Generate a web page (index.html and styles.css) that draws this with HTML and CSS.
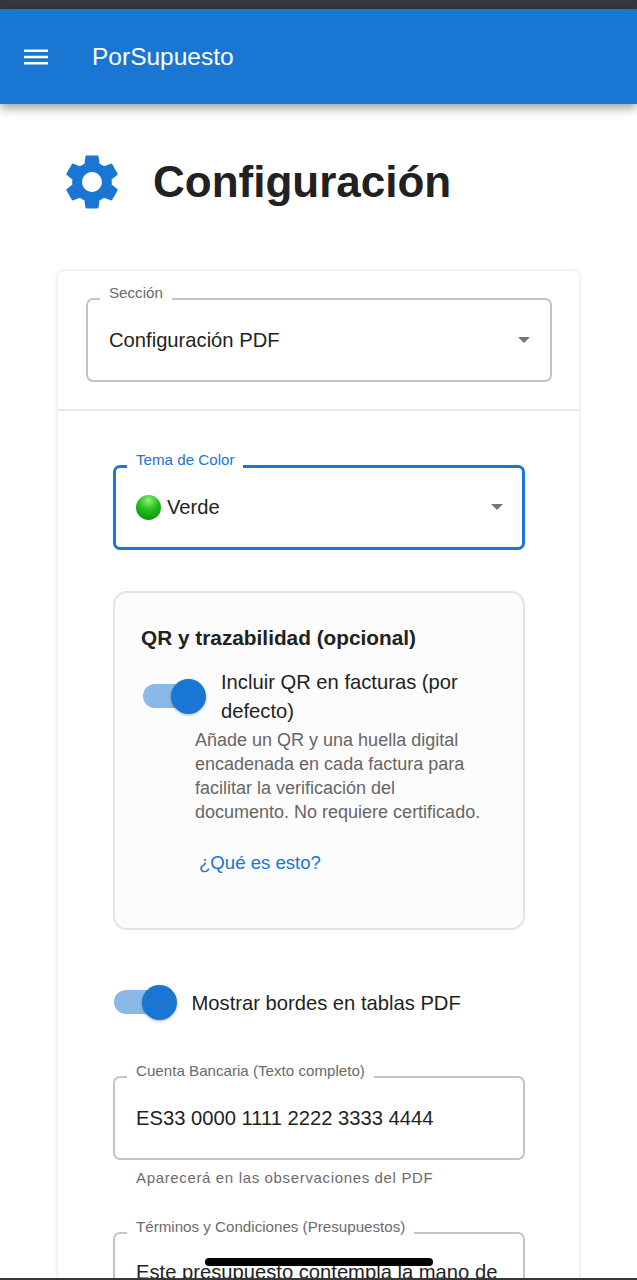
FILE: index.html
```html
<!DOCTYPE html>
<html lang="es">
<head>
  <meta charset="UTF-8" />
  <meta name="viewport" content="width=device-width, initial-scale=1" />
  <title>PorSupuesto</title>
  <link rel="stylesheet" href="styles.css">
</head>
<body>
  <div class="status-strip"></div>

  <header class="app-bar">
    <svg class="menu-icon" viewBox="0 0 24 16" aria-hidden="true">
      <path d="M0 0.5h24v2.6H0zM0 6.7h24v2.6H0zM0 12.9h24v2.6H0z" />
    </svg>
    <span class="app-title">PorSupuesto</span>
  </header>

  <main class="content">
    <div class="page-head">
      <svg class="gear-icon" viewBox="0 0 24 24" aria-hidden="true">
        <path d="M19.14 12.94c.04-.3.06-.61.06-.94 0-.32-.02-.64-.07-.94l2.03-1.58c.18-.14.23-.41.12-.61l-1.92-3.32c-.12-.22-.37-.29-.59-.22l-2.39.96c-.5-.38-1.03-.7-1.62-.94l-.36-2.54c-.04-.24-.24-.41-.48-.41h-3.84c-.24 0-.43.17-.47.41l-.36 2.54c-.59.24-1.13.57-1.62.94l-2.39-.96c-.22-.08-.47 0-.59.22L2.74 8.87c-.12.21-.08.47.12.61l2.03 1.58c-.05.3-.09.63-.09.94s.02.64.07.94l-2.03 1.58c-.18.14-.23.41-.12.61l1.92 3.32c.12.22.37.29.59.22l2.39-.96c.5.38 1.03.7 1.62.94l.36 2.54c.05.24.24.41.48.41h3.84c.24 0 .44-.17.47-.41l.36-2.54c.59-.24 1.13-.56 1.62-.94l2.39.96c.22.08.47 0 .59-.22l1.92-3.32c.12-.22.07-.47-.12-.61l-2.01-1.58zM12 15.6c-1.98 0-3.6-1.62-3.6-3.6s1.62-3.6 3.6-3.6 3.6 1.62 3.6 3.6-1.62 3.6-3.6 3.6z" />
      </svg>
      <h1>Configuración</h1>
    </div>

    <section class="card">
      <div class="card-top">
        <fieldset class="field">
          <legend>Sección</legend>
          <div class="field-value">
            <span>Configuración PDF</span>
            <span class="caret"></span>
          </div>
        </fieldset>
      </div>

      <div class="card-body">
        <fieldset class="field field-focus">
          <legend>Tema de Color</legend>
          <div class="field-value">
            <span class="with-dot"><span class="green-dot"></span>Verde</span>
            <span class="caret"></span>
          </div>
        </fieldset>

        <div class="qr-box">
          <h2>QR y trazabilidad (opcional)</h2>
          <div class="switch-row switch-row-top">
            <span class="switch"><span class="thumb"></span></span>
            <span class="switch-label">Incluir QR en facturas (por defecto)</span>
          </div>
          <p class="qr-help">Añade un QR y una huella digital encadenada en cada factura para facilitar la verificación del documento. No requiere certificado.</p>
          <a class="qr-link" href="#">¿Qué es esto?</a>
        </div>

        <div class="switch-row switch-row-plain">
          <span class="switch"><span class="thumb"></span></span>
          <span class="switch-label">Mostrar bordes en tablas PDF</span>
        </div>

        <fieldset class="field">
          <legend>Cuenta Bancaria (Texto completo)</legend>
          <div class="field-value">
            <span>ES33 0000 1111 2222 3333 4444</span>
          </div>
        </fieldset>
        <p class="field-help">Aparecerá en las observaciones del PDF</p>

        <fieldset class="field field-terms">
          <legend>Términos y Condiciones (Presupuestos)</legend>
          <div class="field-value">
            <span>Este presupuesto contempla la mano de</span>
          </div>
        </fieldset>
      </div>
    </section>
  </main>

  <div class="home-bar"></div>
  <div class="bottom-line"></div>
</body>
</html>
```

FILE: styles.css
```css
* {
  box-sizing: border-box;
}

html, body {
  height: 1280px;
}

body {
  margin: 0;
  overflow: hidden;
  position: relative;
  background-color: #fff;
  color: #1f1f1f;
  font-family: 'Liberation Sans', Arial, sans-serif;
}

.status-strip {
  height: 9px;
  background-color: #33383c;
}

.app-bar {
  height: 95px;
  display: flex;
  align-items: center;
  padding-left: 24px;
  background-color: #1976d2;
  color: #fff;
  box-shadow: 0 4px 10px rgba(0, 0, 0, 0.38);
  position: relative;
}

.menu-icon {
  width: 24px;
  height: 16px;
  fill: #fff;
}

.app-title {
  margin-left: 44px;
  font-size: 24.5px;
}

/* clipped at the fold, the page carries on below */
.content {
  height: 1176px;
  overflow: hidden;
  padding: 0 58px;
}

.page-head {
  height: 167px;
  display: flex;
  align-items: center;
  padding-bottom: 11px;
}

.gear-icon {
  width: 66px;
  height: 66px;
  margin-left: 1px;
  fill: #1976d2;
}

h1 {
  margin: 0 0 0 28px;
  font-size: 44px;
  font-weight: 700;
  color: #212121;
}

.card {
  background-color: #fff;
  border-radius: 6px 6px 0 0;
  box-shadow: 0 0 5px rgba(0, 0, 0, 0.14);
  height: 1100px;
}

.card-top {
  height: 140px;
  padding: 19px 27.5px 0;
  border-bottom: 2px solid #e6e6e6;
}

.card-body {
  padding: 46px 54.5px 0;
}

.field {
  margin: 0;
  padding: 0 21.5px;
  border: 2px solid #c4c4c4;
  border-radius: 7px;
  height: 92px;
}

.field legend {
  padding: 0 9px;
  margin-left: -9px;
  font-size: 15.15px;
  line-height: 18px;
  color: #6b6b6b;
  transform: translateY(-6px);
}

.field-value {
  display: flex;
  align-items: center;
  justify-content: space-between;
  height: 64px;
  font-size: 20.2px;
  color: #1f1f1f;
}

.caret {
  width: 0;
  height: 0;
  margin-right: -2px;
  border-left: 6.5px solid transparent;
  border-right: 6.5px solid transparent;
  border-top: 6.5px solid #757575;
}

.field-focus {
  height: 93px;
  padding: 0 20.5px;
  border: 3px solid #1976d2;
}

.field-focus legend {
  color: #1976d2;
}

.with-dot {
  display: flex;
  align-items: center;
}

.green-dot {
  width: 25px;
  height: 25px;
  margin-right: 6px;
  border-radius: 50%;
  background: radial-gradient(circle at 50% 22%, #8ff07c 0%, #22c01c 42%, #078507 100%);
}

.qr-box {
  height: 339px;
  margin-top: 41px;
  padding: 33px 26.5px 0;
  border: 2px solid #e3e3e3;
  border-radius: 14px;
  background-color: #fcfcfc;
}

h2 {
  margin: 0;
  font-size: 20.8px;
  line-height: 24px;
  font-weight: 700;
  color: #212121;
}

.switch-row {
  display: flex;
  align-items: center;
}

.switch-row-top {
  margin-top: 18px;
  align-items: flex-start;
}

.switch {
  flex: none;
  width: 63px;
  height: 36px;
  position: relative;
}

.switch::before {
  content: '';
  position: absolute;
  left: 1px;
  top: 5px;
  width: 58px;
  height: 24px;
  border-radius: 12px;
  background-color: #8ab8e8;
}

.thumb {
  position: absolute;
  right: -1px;
  top: 0;
  width: 35px;
  height: 35px;
  border-radius: 50%;
  background-color: #1976d2;
  box-shadow: 0 1px 3px rgba(0, 0, 0, 0.3);
}

.switch-label {
  font-size: 20.2px;
  line-height: 29px;
  color: #1f1f1f;
}

.switch-row-top .switch {
  margin: 11px 16px 0 1px;
}

.switch-row-plain {
  margin-top: 55px;
}

.switch-row-plain .switch {
  margin-right: 16px;
}

.qr-help {
  margin: 2px 10px 0 54px;
  font-size: 18px;
  line-height: 24px;
  color: #666;
}

.qr-link {
  display: block;
  margin: 28px 0 0 58px;
  font-size: 18.6px;
  color: #1976d2;
  text-decoration: none;
}

.switch-row-plain + .field {
  margin-top: 47px;
}

.field-help {
  margin: 8px 0 0 23.5px;
  font-size: 15px;
  letter-spacing: 0.65px;
  line-height: 20px;
  color: #6b6b6b;
}

.field-terms {
  margin-top: 36px;
  height: 200px;
}

.field-terms .field-value {
  height: 60px;
}

.home-bar {
  position: absolute;
  left: 205px;
  top: 1258px;
  width: 228px;
  height: 8px;
  border-radius: 4px;
  background-color: #000;
}

.bottom-line {
  position: absolute;
  left: 0;
  right: 0;
  bottom: 0;
  height: 2px;
  background-color: #33383c;
}
```
